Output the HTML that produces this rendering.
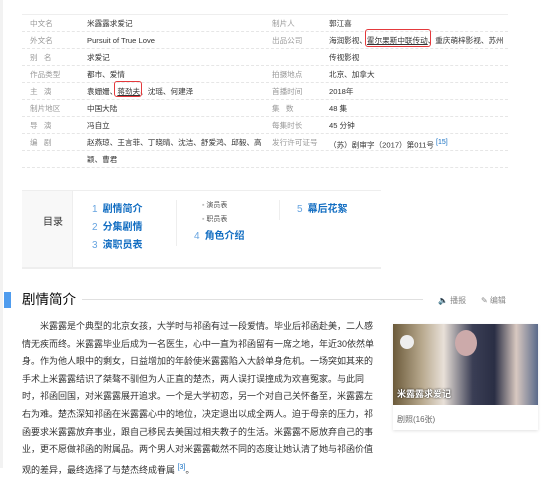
<!DOCTYPE html>
<html><head><meta charset="utf-8"><style>
*{margin:0;padding:0;box-sizing:border-box}
body{width:554px;height:468px;background:#fff;font-family:"Liberation Sans","Noto Sans CJK SC",sans-serif;font-size:7.6px;color:#333;position:relative;overflow:hidden}
.ab{position:absolute;white-space:nowrap}
.row{position:absolute;left:22px;width:486px;height:17px;border-bottom:1px dashed #e6e6e6}
.lbl{color:#999}
.col div{height:17px}
.red{position:absolute;border:1.5px solid #e4393c;border-radius:3px}
.toc a{color:#136ec2;font-size:10px;font-weight:bold}
.toc .n{color:#67a4e0;font-weight:normal;margin-right:5px}
.p div{height:17.6px;text-align:justify;text-align-last:justify;white-space:nowrap}
.p div.l{text-align-last:left}
</style></head><body>
<div class="ab" style="left:0;top:0;width:3px;height:468px;background:#f2f2f2"></div>
<div class="ab" style="left:22px;top:14px;width:486px;border-top:1px solid #eee"></div>

<div class="row" style="top:15px"></div><div class="row" style="top:32px"></div><div class="row" style="top:49px"></div><div class="row" style="top:66px"></div><div class="row" style="top:83px"></div><div class="row" style="top:100px"></div><div class="row" style="top:117px"></div><div class="row" style="top:134px"></div><div class="row" style="top:151px"></div>

<div class="ab col" style="left:30px;top:17px;line-height:13px">
<div class="lbl">中文名</div><div class="lbl">外文名</div><div class="lbl">别&nbsp;&nbsp;&nbsp;名</div><div class="lbl">作品类型</div><div class="lbl">主&nbsp;&nbsp;&nbsp;演</div><div class="lbl">制片地区</div><div class="lbl">导&nbsp;&nbsp;&nbsp;演</div><div class="lbl">编&nbsp;&nbsp;&nbsp;剧</div></div>
<div class="ab col" style="left:87px;top:17px;line-height:13px">
<div>米露露求爱记</div><div>Pursuit of True Love</div><div>求爱记</div><div>都市、爱情</div><div>袁姗姗、<u>蒋劲夫</u>、沈瑶、何建泽</div><div>中国大陆</div><div>冯自立</div><div>赵燕琼、王言菲、丁晓晴、沈洁、舒爱鸿、邱毅、高</div><div>颖、曹君</div></div>
<div class="ab col" style="left:272px;top:17px;line-height:13px">
<div class="lbl">制片人</div><div class="lbl">出品公司</div><div class="lbl">&nbsp;</div><div class="lbl">拍摄地点</div><div class="lbl">首播时间</div><div class="lbl">集&nbsp;&nbsp;&nbsp;数</div><div class="lbl">每集时长</div><div class="lbl">发行许可证号</div></div>
<div class="ab col" style="left:329px;top:17px;line-height:13px">
<div>郭江喜</div><div>海润影视、<u>霍尔果斯中联传动</u>、重庆萌梓影视、苏州</div><div>传视影视</div><div>北京、加拿大</div><div>2018年</div><div>48 集</div><div>45 分钟</div><div>（苏）剧审字（2017）第011号 <sup style="color:#136ec2;font-size:7px">[15]</sup></div></div>
<div class="red" style="left:365px;top:29px;width:66px;height:18px"></div>
<div class="red" style="left:114px;top:81px;width:28px;height:16px"></div>

<div class="ab" style="left:22px;top:190px;width:359px;height:79px;border-top:1px solid #eee;border-bottom:2px solid #eee"></div>
<div class="ab" style="left:22px;top:191px;width:51px;height:76px;background:#f8f8f8;border-right:1px solid #eee"></div>
<div class="ab" style="left:43px;top:213px;font-size:10px;color:#333">目录</div>
<div class="ab" style="left:176px;top:200px;width:1px;height:46px;background:#eee"></div>
<div class="ab" style="left:279px;top:200px;width:1px;height:20px;background:#eee"></div>
<div class="ab toc" style="left:92px;top:201px;line-height:18px"><div><a><span class="n">1</span>剧情简介</a></div><div><a><span class="n">2</span>分集剧情</a></div><div><a><span class="n">3</span>演职员表</a></div></div>
<div class="ab" style="left:202px;top:199px;font-size:7px;color:#555;line-height:14px"><div><span style="color:#bbb">▪</span> 演员表</div><div><span style="color:#bbb">▪</span> 职员表</div></div>
<div class="ab toc" style="left:194px;top:228px;line-height:18px"><a><span class="n">4</span>角色介绍</a></div>
<div class="ab toc" style="left:297px;top:201px;line-height:18px"><a><span class="n">5</span>幕后花絮</a></div>

<div class="ab" style="left:4px;top:292px;width:7px;height:16px;background:#4f9cee"></div>
<div class="ab" style="left:22px;top:290px;font-size:13.5px;color:#000;line-height:20px">剧情简介</div>
<div class="ab" style="left:82px;top:299px;width:341px;height:1px;background:#e0e0e0"></div>
<div class="ab" style="left:438px;top:295px;font-size:8px;color:#888">🔈 播报</div>
<div class="ab" style="left:481px;top:295px;font-size:8px;color:#888">✎ 编辑</div>

<div class="ab p" style="left:22px;top:318px;width:336px;font-size:9px;line-height:17.6px;color:#333">
<div style="padding-left:18px">米露露是个典型的北京女孩，大学时与祁函有过一段爱情。毕业后祁函赴美，二人感</div>
<div>情无疾而终。米露露毕业后成为一名医生，心中一直为祁函留有一席之地，年近30依然单</div>
<div>身。作为他人眼中的剩女，日益增加的年龄使米露露陷入大龄单身危机。一场突如其来的</div>
<div class="l">手术上米露露结识了桀骜不驯但为人正直的楚杰，两人误打误撞成为欢喜冤家。与此同</div>
<div>时，祁函回国，对米露露展开追求。一个是大学初恋，另一个对自己关怀备至，米露露左</div>
<div>右为难。楚杰深知祁函在米露露心中的地位，决定退出以成全两人。迫于母亲的压力，祁</div>
<div>函要求米露露放弃事业，跟自己移民去美国过相夫教子的生活。米露露不愿放弃自己的事</div>
<div>业，更不愿做祁函的附属品。两个男人对米露露截然不同的态度让她认清了她与祁函价值</div>
<div class="l">观的差异，最终选择了与楚杰终成眷属 <sup style="color:#136ec2;font-size:7px">[3]</sup>。</div>
</div>

<div class="ab" style="left:393px;top:324px;width:145px;height:106px;box-shadow:0 1px 3px rgba(0,0,0,.12);background:#fff"></div>
<div class="ab" style="left:393px;top:324px;width:145px;height:81px;background:linear-gradient(90deg,#6b5a3a 0%,#b8a98e 20%,#e8e0d8 35%,#3a3e55 55%,#2a2e44 70%,#d8c8c0 85%,#5a6a8a 100%)"></div>
<div class="ab" style="left:400px;top:335px;width:14px;height:14px;border-radius:50%;background:#eee"></div>
<div class="ab" style="left:455px;top:330px;width:22px;height:26px;border-radius:50%;background:#caa"></div>
<div class="ab" style="left:397px;top:387px;font-size:9px;font-weight:bold;color:#fff;text-shadow:0 0 2px #000">米露露求爱记</div>
<div class="ab" style="left:397px;top:414px;font-size:8px;color:#666">剧照(16张)</div>
</body></html>
